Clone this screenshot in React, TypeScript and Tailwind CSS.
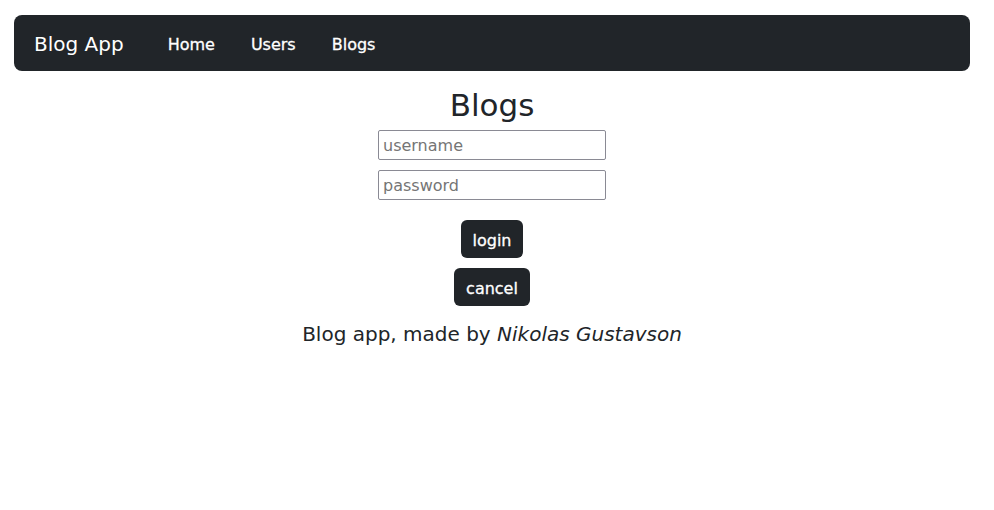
import React from "react";

export default function App() {
  return (
    <div className="min-h-[510px] bg-white text-[#212529]" style={{ fontFamily: '"DejaVu Sans", Verdana, sans-serif' }}>
      <div className="pt-[15px] pl-[14px] pr-[24px]">
        <nav className="flex h-[56px] items-center rounded-[8px] bg-[#212529] pl-[20px]">
          <span className="pt-[2px] text-[20px] text-white">Blog App</span>
          <div className="ml-[44px] flex items-center gap-[36px] pt-[4px] text-[16px] text-white [-webkit-text-stroke:0.3px_white]">
            <a>Home</a>
            <a>Users</a>
            <a>Blogs</a>
          </div>
        </nav>
        <div className="flex flex-col items-center">
          <h1 className="mt-[15px] text-[31px] leading-[38px]">Blogs</h1>
          <input
            placeholder="username"
            className="mt-[6px] h-[30px] w-[228px] rounded-[2px] border border-[#8a8a94] px-[4px] text-[16px] text-[#212529] placeholder:text-[#757575] outline-none"
          />
          <input
            type="password"
            placeholder="password"
            className="mt-[10px] h-[30px] w-[228px] rounded-[2px] border border-[#8a8a94] px-[4px] text-[16px] text-[#212529] placeholder:text-[#757575] outline-none"
          />
          <button className="mt-[20px] h-[38px] rounded-[6px] bg-[#212529] px-[12px] pt-[3px] text-[16px] text-white [-webkit-text-stroke:0.3px_white]">login</button>
          <button className="mt-[10px] h-[38px] rounded-[6px] bg-[#212529] px-[12px] pt-[3px] text-[16px] text-white [-webkit-text-stroke:0.3px_white]">cancel</button>
          <p className="mt-[14px] text-[20px] leading-[28px]">
            Blog app, made by <em>Nikolas Gustavson</em>
          </p>
        </div>
      </div>
    </div>
  );
}
